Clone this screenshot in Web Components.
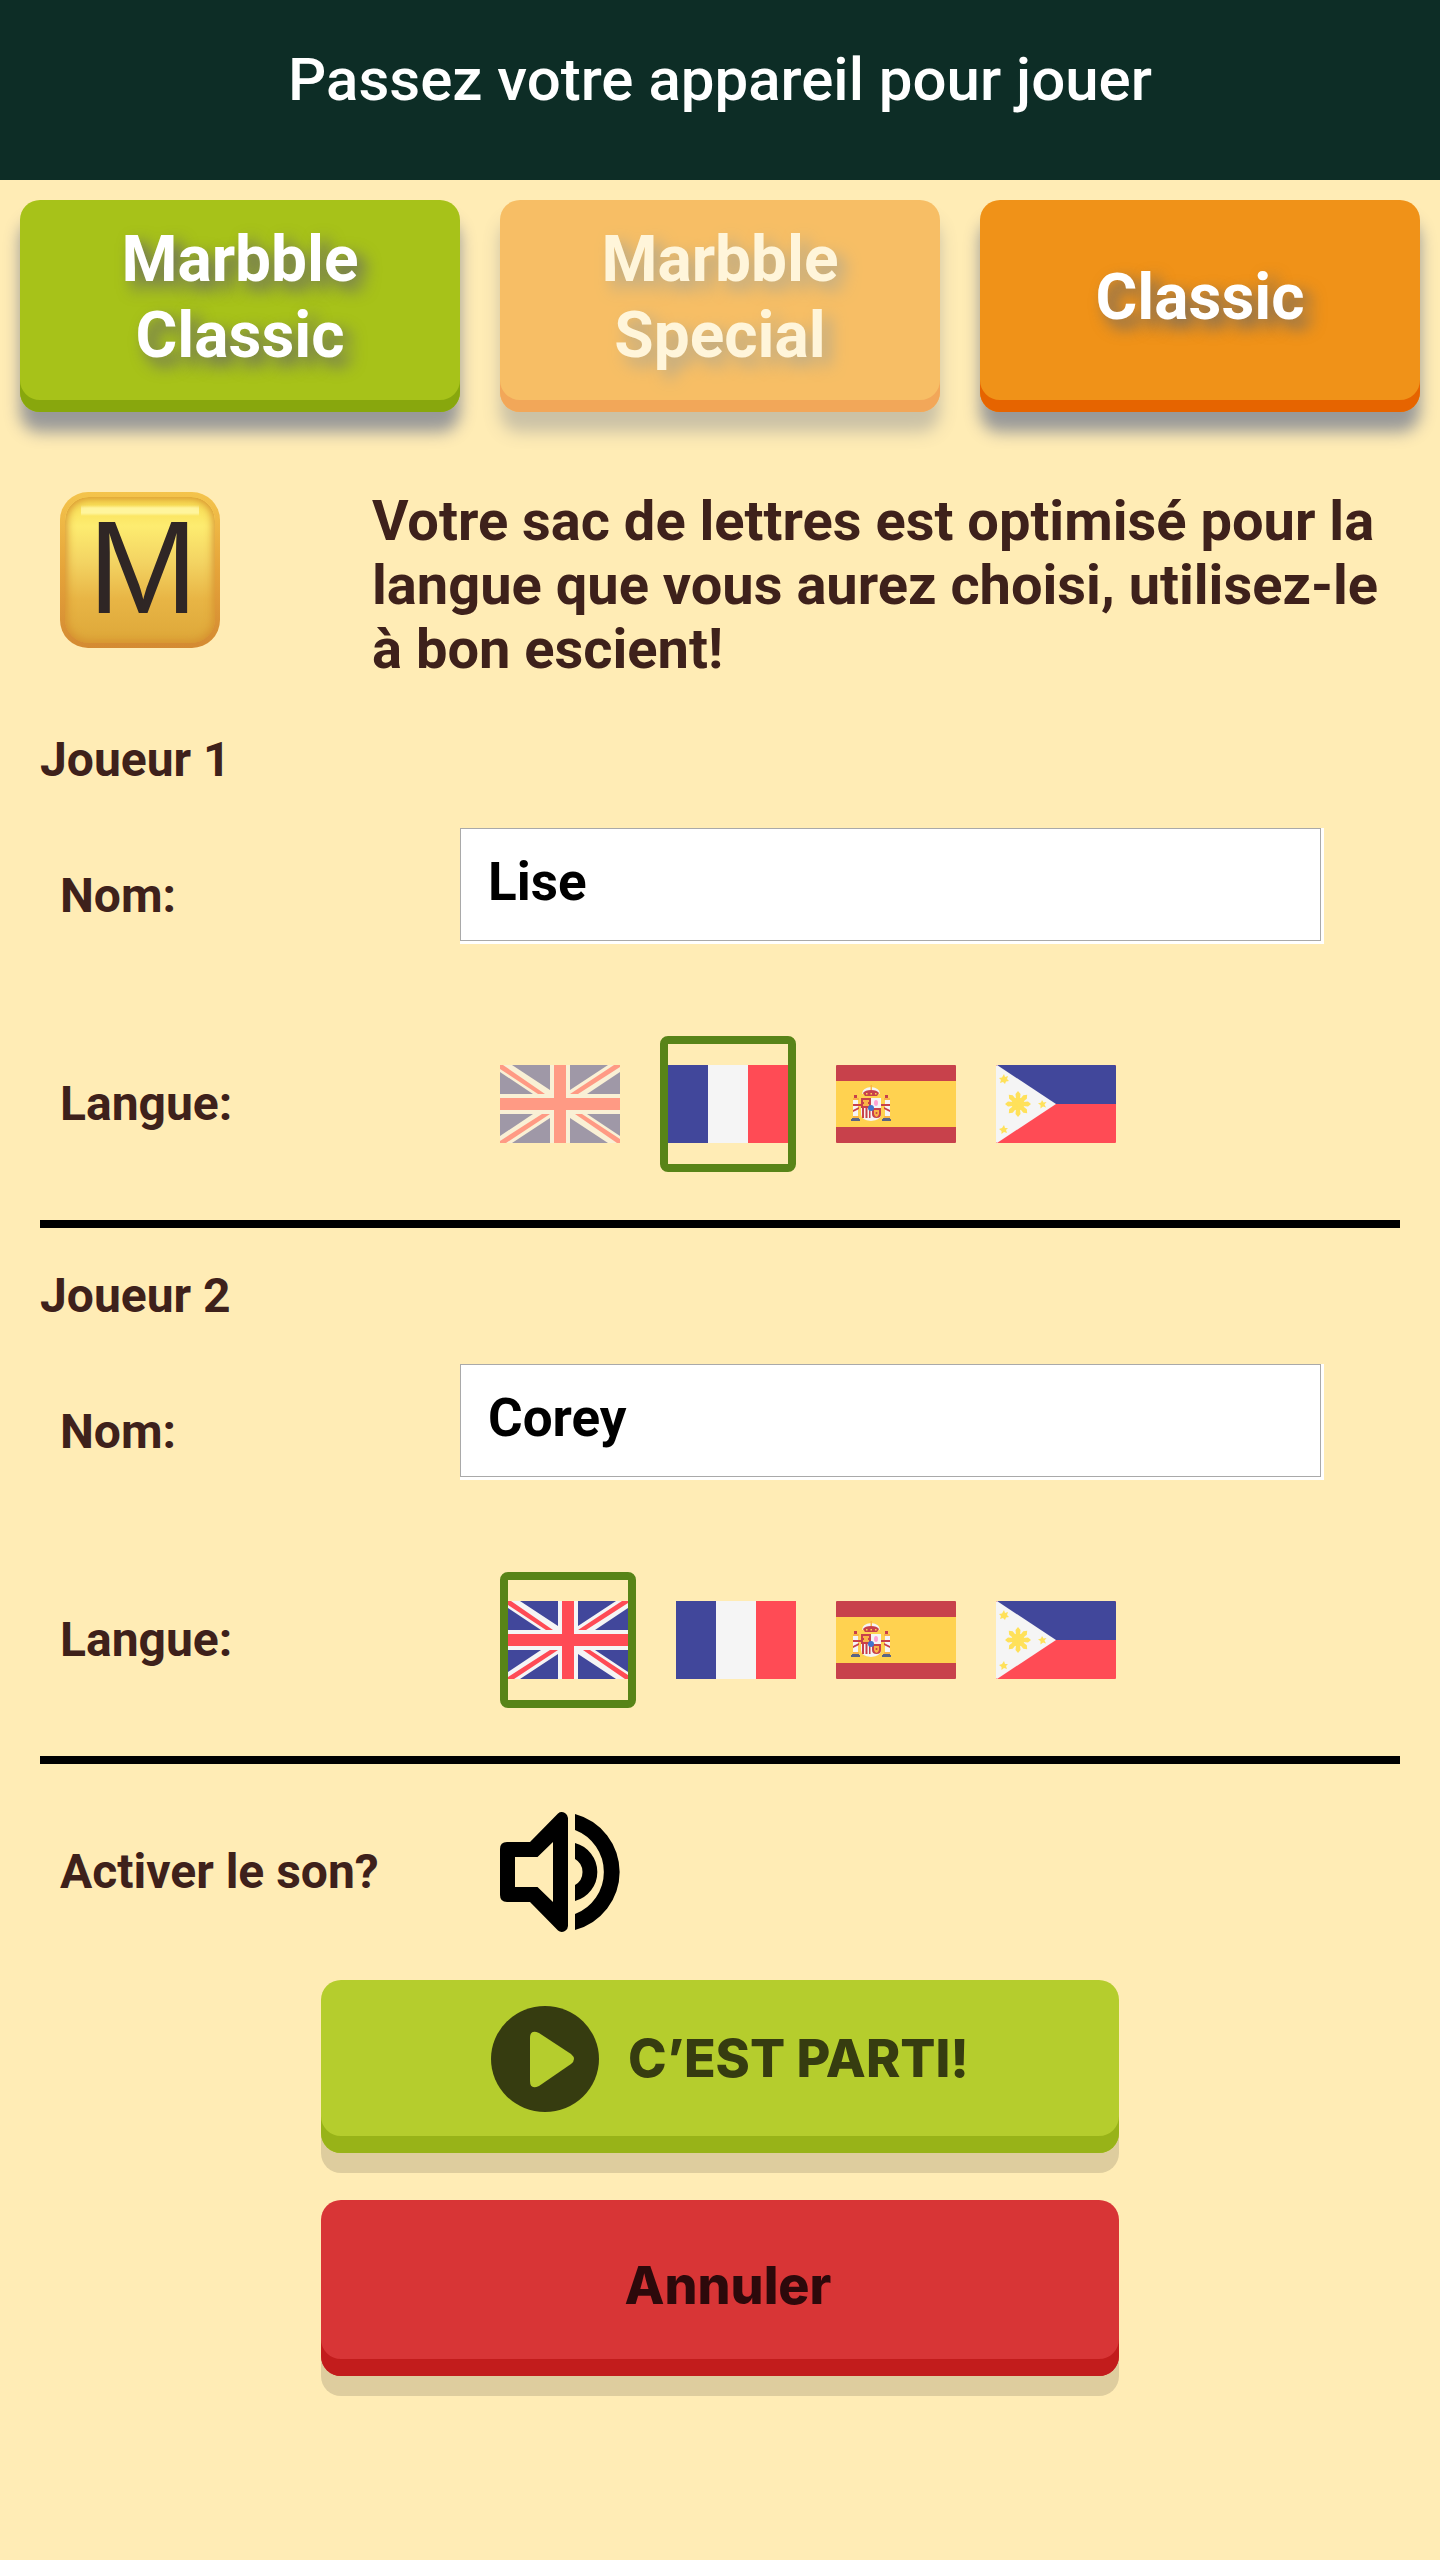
<!DOCTYPE html>
<html lang="fr">
<head>
<meta charset="utf-8">
<meta name="viewport" content="width=device-width, initial-scale=1">
<title>Marbble</title>
<style>
  html, body { margin: 0; min-height: 100%; background: #ffecb5; }
  body { font-family: Roboto, "Liberation Sans", sans-serif; color: #3e211b; }
</style>
</head>
<body>
<marbble-setup></marbble-setup>

<script>
const define = (name, html, setup) => {
  const template = document.createElement('template');
  template.innerHTML = html;
  customElements.define(name, class extends HTMLElement {
    connectedCallback() {
      if (this.shadowRoot) return;
      this.attachShadow({ mode: 'open' }).append(template.content.cloneNode(true));
      if (setup) setup(this, this.shadowRoot);
    }
  });
};

const FLAGS = {
  en: ['English', `
    <path fill="#f5f5f5" d="M0 0h120v78H0z"/>
    <path fill="#41479b" d="M12 0H50V25zM0 7V29H33zM108 0H70V25zM120 7V29H87zM12 78H50V53zM0 71V49H33zM108 78H70V53zM120 71V49H87z"/>
    <path fill="#ff4b55" d="M54 0h12v33h54v12H66v33H54V45H0V33h54zM0 0H3L45 29H38L0 4zM114 0H120V2L78 29H70zM120 78H117L75 49H82L120 74zM6 78H0V76L42 49H50z"/>`],
  fr: ['Français', `
    <path fill="#41479b" d="M0 0h40v78H0z"/><path fill="#f5f5f5" d="M40 0h40v78H40z"/><path fill="#ff4b55" d="M80 0h40v78H80z"/>`],
  es: ['Español', `
    <rect width="120" height="78" rx="1" fill="#c8414b"/><path fill="#ffd250" d="M0 16h120v46H0z"/>
    <path fill="#f5f5f5" d="M17 35h5v17h-5zM49 35h5v17h-5zM25 33h20v16q0 6-10 7q-10-1-10-7z"/>
    <path fill="#fab446" d="M17 33h6v2h-6zM48 33h6v2h-6zM17 51h6v2h-6zM48 51h6v2h-6z"/>
    <path fill="#c8414b" d="M18 30h3v3h-3zM49 30h3v3h-3zM17 39h8v2h-8zM45 39h9v2h-9zM17 45l6-3v2l-6 3zM48 42l6 3v2l-6-3zM25 33h10v10H25zM26 43h2v10h-2zM29.500 43h2v10h-2zM33 43h1.500v10H33zM36 43h9v6q0 4-4.500 4t-4.500-4z"/>
    <path fill="#fab446" d="M27 35h6v2h-1v2h1v2h-6v-2h1v-2h-1zM38 45h5v4q-1 3-2.500 3t-2.500-3z"/>
    <circle cx="40.500" cy="48" r="1" fill="#c8414b"/>
    <ellipse cx="40" cy="38" rx="2" ry="3" fill="#ffa0d2"/>
    <circle cx="35" cy="43" r="3" fill="#4173cd"/>
    <path fill="#f5f5f5" d="M26 29q0-6 9-7q9 1 9 7l-3-1q-6-3-12 0z"/>
    <path fill="#fab446" d="M34.500 20h1.500v5h-1.500z"/>
    <path fill="#c8414b" d="M27 28q2-3 8-3t8 3l-2 3H29z"/>
    <path fill="#ffd250" d="M30 28h1.500v1.500H30zM34.500 28H36v1.500h-1.500zM39 28h1.500v1.500H39z"/>
    <path fill="#5b6585" d="M16 53h7v1h1v2h-9v-2h1zM47 53h7v1h1v2h-9v-2h1z"/>`],
  ph: ['Filipino', `
    <rect width="120" height="78" rx="1" fill="#ff4b55"/><path fill="#41479b" d="M1 0H119L120 1V39H30z"/>
    <path fill="#f5f5f5" d="M0 1L1 0L60 39L1 78L0 77z"/>
    <g fill="#ffe15a"><circle cx="22" cy="39" r="6.500"/>
      <path d="M20.500 39L19.500 29L22 26L24.500 29L23.500 39L24.500 49L22 52L19.500 49z"/>
      <path transform="rotate(45 22 39)" d="M20.500 39L19.500 29L22 26L24.500 29L23.500 39L24.500 49L22 52L19.500 49z"/>
      <path transform="rotate(90 22 39)" d="M20.500 39L19.500 29L22 26L24.500 29L23.500 39L24.500 49L22 52L19.500 49z"/>
      <path transform="rotate(135 22 39)" d="M20.500 39L19.500 29L22 26L24.500 29L23.500 39L24.500 49L22 52L19.500 49z"/>
      <path d="M8 9l1 3l3-1l-1 3l2 2l-3 .5l-1 2.500l-2-2l-3 1l1-3l-2-2l3-.5z"/>
      <path d="M8 60l1 3l3 0l-2 2l1 3l-3-1l-2.500 2v-3l-2.500-2l3-1z"/>
      <path d="M46 35l1.500 2.500l3-.5l-2 2.500l1.500 3l-3-1l-2.500 2v-3.500l-2.500-1.500l3-1z"/></g>`]
};

define('pass-header', `
<style>
  :host { display: block; background: #0d2d26; }
  h1 { margin: 0; padding: 44px 24px 64px; font-size: 60px; line-height: 72px; font-weight: 500; text-align: center; color: #fff; }
</style>
<h1><slot></slot></h1>`);

define('mode-button', `
<style>
  :host { display: flex; flex: 1; --face: #f09218; --edge: #e66400; }
  :host([tone=green]) { --face: #a7c219; --edge: #88a70d; }
  :host([faded]) { opacity: .5; }
  button { flex: 1; height: 212px; margin: 0; padding: 0 80px 16px; border: 0; border-radius: 20px; background: var(--face);
    box-shadow: inset 0 -12px 0 var(--edge), 0 20px 16px #999;
    font: bold 64px/76px Roboto, "Liberation Sans", sans-serif; color: #fff; text-shadow: 8px 8px 16px #666; }
</style>
<button type="button"><slot></slot></button>`);

define('letter-tile', `
<style>
  :host { display: flex; width: 160px; height: 156px; box-sizing: border-box; padding: 5px; border-radius: 28px;
    background: linear-gradient(#f4c44c, #e5a43a 50%, #d48a32); }
  div { flex: 1; display: flex; align-items: center; justify-content: center; padding: 0 0 4px 6px; border-radius: 24px;
    background: linear-gradient(transparent 8px, #fff59d 11px, #fff59d 16px, transparent 19px) center / 118px 100% no-repeat,
      linear-gradient(#f8dc50, #fdec70 20%, #f3d362 45%, #e8b545 70%, #dda739);
    box-shadow: inset 0 0 8px 2px #d6902f;
    font: 132px/142px "Liberation Sans", sans-serif; color: #2f2625; }
</style>
<div><slot></slot></div>`);

define('flag-option', `
<style>
  :host { display: block; }
  label { display: flex; width: 120px; height: 120px; align-items: center; cursor: pointer; }
  :host([selected]) label { border: 8px solid #588418; border-radius: 8px; }
  :host([faded]) svg { opacity: .5; }
  input { appearance: none; position: absolute; width: 0; height: 0; margin: 0; }
  svg { display: block; width: 120px; height: 78px; }
</style>
<label><input type="radio"><svg viewBox="0 0 120 78"></svg></label>`, (host, root) => {
  const [name, art] = FLAGS[host.getAttribute('lang-code')];
  root.querySelector('svg').innerHTML = art;
  const input = root.querySelector('input');
  input.setAttribute('aria-label', name);
  input.checked = host.hasAttribute('selected');
});

define('player-form', `
<style>
  :host { display: block; margin: 0 40px; border-bottom: 8px solid #000; font-size: 48px; line-height: 56px; font-weight: bold; }
  h2 { margin: 0; font: inherit; padding: 40px 0; }
  .row { display: grid; grid-template-columns: 400px 1fr; padding-left: 20px; }
  .name { height: 136px; align-items: start; }
  .name label { padding-top: 40px; }
  .field { display: flex; margin-right: 76px; padding: 0 3px 3px 0; background: #fff; }
  .field input { flex: 1; min-width: 0; height: 113px; box-sizing: border-box; margin: 0; padding: 0 27px 6px; border: 1px solid #a9a9a9;
    border-radius: 0; background: #fff; color: #000; font: bold 53px/60px Roboto, "Liberation Sans", sans-serif; outline: 0; }
  .lang { height: 256px; align-items: center; padding-top: 24px; box-sizing: border-box; }
  .flags { display: flex; align-items: center; gap: 40px; padding-left: 40px; }
</style>
<h2></h2>
<div class="row name"><label for="name">Nom:</label><div class="field"><input id="name" type="text"></div></div>
<div class="row lang"><span>Langue:</span><div class="flags" role="radiogroup" aria-label="Langue"><slot></slot></div></div>`, (host, root) => {
  root.querySelector('h2').textContent = host.getAttribute('heading');
  root.querySelector('input').value = host.getAttribute('player');
});

define('sound-toggle', `
<style>
  :host { display: grid; grid-template-columns: 440px 1fr; align-items: center; margin: 48px 60px; font-size: 48px; line-height: 56px; font-weight: bold; }
  button { display: block; width: 120px; height: 120px; padding: 0; border: 0; background: none; color: #000; }
  svg { display: block; width: 120px; height: 120px; }
</style>
<span id="label"><slot></slot></span>
<button type="button" aria-labelledby="label"><svg viewBox="0 0 120 120" fill="currentColor">
  <path fill-rule="evenodd" d="M7 30H30L58 1.500Q61 -1 65 1Q68 3 68 6V114Q68 117 65 119Q61 121 58 118.500L30 90H7Q0 90 0 83V37Q0 30 7 30ZM15 45V75H37.500L53 90V30L37.500 45Z"/>
  <path d="M75 2A60 60 0 0 1 75 118V102A45 45 0 0 0 75 18ZM75 31A30 30 0 0 1 75 89V73A15 15 0 0 0 75 47Z"/>
</svg></button>`);

define('action-button', `
<style>
  :host { display: block; --face: #b5cd2d; --edge: #98b318; --ink: #363c10; }
  :host([tone=red]) { --face: #d83536; --edge: #c21c1c; --ink: #2d090b; }
  button { display: flex; align-items: center; justify-content: center; gap: 29px; width: 100%; height: 176px; margin: 0 0 20px; padding: 0 0 4px 16px;
    border: 0; border-radius: 20px; background: var(--face); color: var(--ink);
    box-shadow: inset 0 -17px 0 var(--edge), 0 20px 0 #decd9e;
    font: 800 52px/64px Inter, "Liberation Sans", sans-serif; }
  :host([tone=green]) button { height: 173px; padding: 0 0 16px 20px; }
</style>
<button type="button"><slot name="icon"></slot><span><slot></slot></span></button>`);

define('play-icon', `
<style>:host { display: block; } svg { display: block; width: 108px; height: 106px; }</style>
<svg viewBox="0 0 108 106"><ellipse cx="54" cy="53" rx="54" ry="53" fill="#363c10"/>
<path d="M39 32Q39 23 48 27L80 48Q86 53 80 58L48 80Q39 84 39 75Z" fill="#b5cd2d"/></svg>`);

define('marbble-setup', `
<style>
  :host { display: block; }
  .modes { display: flex; gap: 40px; padding: 20px; }
  .intro { display: grid; grid-template-columns: 312px 1fr; align-items: start; padding: 60px 40px 11px 60px; }
  .intro p { margin: -3px 0 0; font-size: 56px; line-height: 64px; font-weight: bold; }
  .actions { display: grid; gap: 27px; margin: 0 auto; max-width: 798px; padding-bottom: 160px; }
</style>
<pass-header>Passez votre appareil pour jouer</pass-header>
<main>
  <div class="modes">
    <mode-button tone="green">Marbble Classic</mode-button>
    <mode-button faded>Marbble Special</mode-button>
    <mode-button>Classic</mode-button>
  </div>
  <div class="intro"><letter-tile>M</letter-tile>
    <p>Votre sac de lettres est optimisé pour la langue que vous aurez choisi, utilisez-le à bon escient!</p></div>
  <player-form heading="Joueur 1" player="Lise">
    <flag-option lang-code="en" faded></flag-option><flag-option lang-code="fr" selected></flag-option>
    <flag-option lang-code="es"></flag-option><flag-option lang-code="ph"></flag-option>
  </player-form>
  <player-form heading="Joueur 2" player="Corey">
    <flag-option lang-code="en" selected></flag-option><flag-option lang-code="fr"></flag-option>
    <flag-option lang-code="es"></flag-option><flag-option lang-code="ph"></flag-option>
  </player-form>
  <sound-toggle>Activer le son?</sound-toggle>
  <div class="actions">
    <action-button tone="green"><play-icon slot="icon"></play-icon>C’EST PARTI!</action-button>
    <action-button tone="red">Annuler</action-button>
  </div>
</main>`);
</script>
</body>
</html>
